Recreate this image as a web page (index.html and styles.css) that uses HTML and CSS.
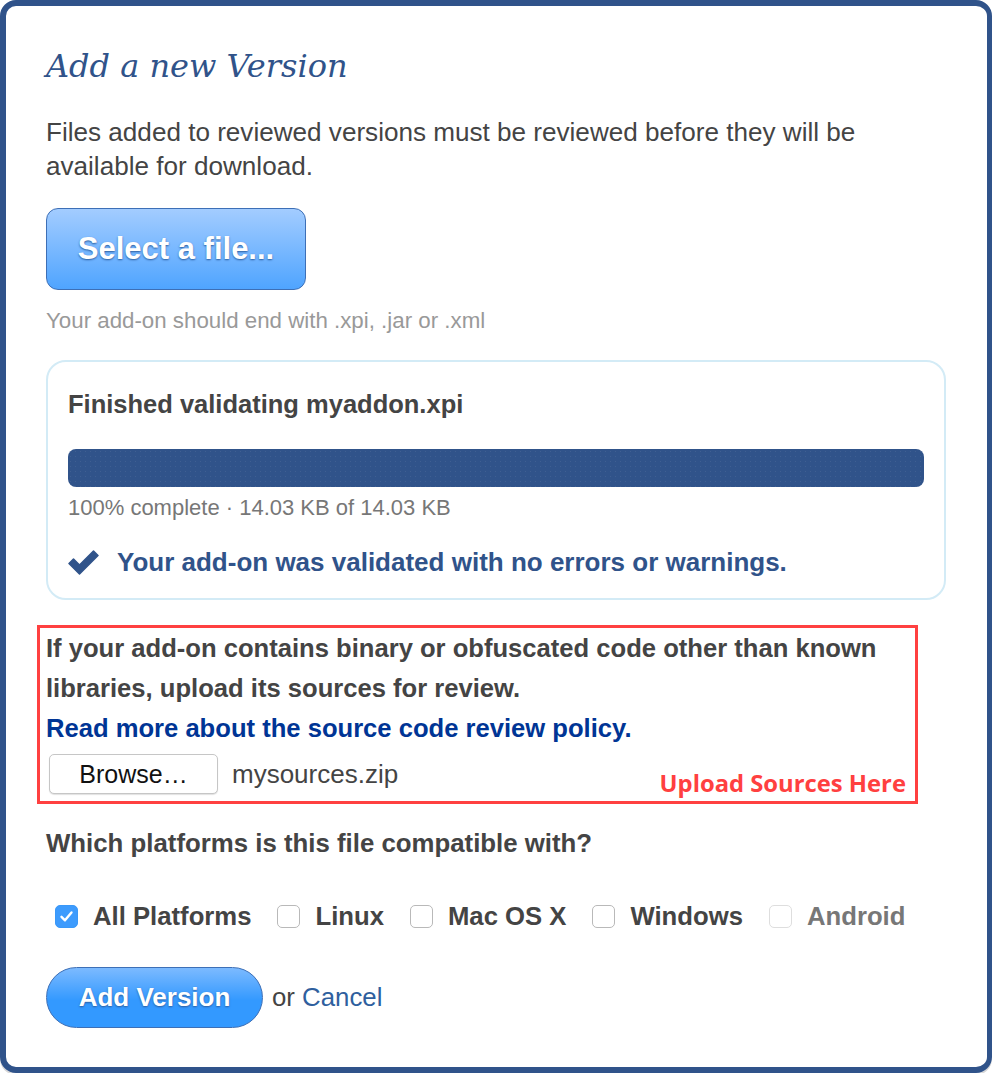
FILE: index.html
```html
<!DOCTYPE html>
<html>
<head>
<meta charset="utf-8">
<link rel="stylesheet" href="styles.css">
</head>
<body>
<div class="frame">
  <h2 class="title">Add a new Version</h2>
  <p class="intro">Files added to reviewed versions must be reviewed before they will be available for download.</p>
  <button class="select-btn">Select a file...</button>
  <p class="hint">Your add-on should end with .xpi, .jar or .xml</p>

  <div class="validation">
    <h3 class="val-title">Finished validating myaddon.xpi</h3>
    <div class="bar"></div>
    <p class="stats">100% complete · 14.03 KB of 14.03 KB</p>
    <p class="success">
      <svg class="tick" width="31" height="28" viewBox="0 0 31 28"><path d="M1 15.5 L5.5 11 L11.5 17 L25.5 3 L30 7.5 L11.5 26 Z" fill="#30538a" stroke="#30538a" stroke-width="1.5" stroke-linejoin="round"/></svg>
      <span>Your add-on was validated with no errors or warnings.</span>
    </p>
  </div>

  <div class="sources">
    <p class="src-text">If your add-on contains binary or obfuscated code other than known libraries, upload its sources for review.</p>
    <a class="src-link" href="#">Read more about the source code review policy.</a>
    <div class="src-row">
      <button class="browse">Browse…</button>
      <span class="filename">mysources.zip</span>
      <span class="upload-note">Upload Sources Here</span>
    </div>
  </div>

  <p class="platforms-q">Which platforms is this file compatible with?</p>
  <div class="platforms">
    <label class="plat"><span class="box checked"><svg width="23" height="23" viewBox="0 0 23 23"><path d="M6.5 11.8 L10 15.3 L16.5 7.5" fill="none" stroke="#fff" stroke-width="2.4" stroke-linecap="round" stroke-linejoin="round"/></svg></span>All Platforms</label>
    <label class="plat"><span class="box"></span>Linux</label>
    <label class="plat"><span class="box"></span>Mac OS X</label>
    <label class="plat"><span class="box"></span>Windows</label>
    <label class="plat disabled"><span class="box"></span>Android</label>
  </div>

  <div class="actions">
    <button class="add-btn">Add Version</button>
    <span class="or">or <a href="#" class="cancel">Cancel</a></span>
  </div>
</div>
</body>
</html>
```

FILE: styles.css
```css
* { box-sizing: border-box; }
html, body { margin: 0; padding: 0; background: #fff; }
body {
  font-family: "Liberation Sans", Arial, sans-serif;
  color: #444;
  width: 992px;
}
.frame {
  width: 992px;
  height: 1073px;
  border: 6px solid #30538a;
  border-right-width: 5px;
  border-radius: 16px;
  padding: 40px 41px 0 40px;
  box-shadow: 0 2px 0 #d8d8d8;
}
.title {
  margin: 0;
  font-family: "DejaVu Serif", Georgia, serif;
  font-style: italic;
  font-weight: normal;
  font-size: 32px;
  line-height: 40px;
  color: #30538a;
}
.intro {
  margin: 29px 0 0;
  font-size: 26.1px;
  line-height: 34px;
}
.select-btn {
  display: block;
  margin-top: 25px;
  width: 260px;
  height: 82px;
  border: 1.5px solid #3d6fb6;
  border-radius: 12px;
  background: linear-gradient(#a3ccff, #4fa4ff);
  color: #fff;
  font-family: "Liberation Sans", Arial, sans-serif;
  font-weight: bold;
  font-size: 31px;
  text-shadow: 0 1px 2px #2b5c9e;
  padding: 0;
}
.hint {
  margin: 19px 0 0;
  font-size: 22.3px;
  line-height: 24px;
  color: #999;
}
.validation {
  margin-top: 27px;
  height: 240px;
  border: 2px solid #d3ebf6;
  border-radius: 20px;
  padding: 27px 20px 0;
}
.val-title {
  margin: 0;
  font-size: 25.5px;
  line-height: 30px;
  font-weight: bold;
  color: #444;
}
.bar {
  margin-top: 30px;
  height: 38px;
  border-radius: 8px;
  background-color: #30538a;
  background-image: radial-gradient(circle, rgba(255,255,255,0.07) 0.6px, transparent 1px);
  background-size: 5px 5px;
}
.stats {
  margin: 9px 0 0;
  font-size: 22px;
  line-height: 24px;
  color: #777;
}
.success {
  margin: 27px 0 0;
  display: flex;
  align-items: center;
  gap: 18px;
  font-size: 26px;
  line-height: 30px;
  font-weight: bold;
  color: #30538a;
}
.tick { flex: none; }
.sources {
  position: relative;
  margin: 25px 0 0 -9px;
  width: 881px;
  height: 179px;
  border: 3px solid #ff4040;
  padding: 0 9px 0 6px;
}
.src-text {
  margin: 0;
  font-size: 25.6px;
  line-height: 40px;
  font-weight: bold;
}
.src-link {
  display: block;
  font-size: 25.6px;
  line-height: 40px;
  font-weight: bold;
  color: #003595;
  text-decoration: none;
}
.src-row {
  display: flex;
  align-items: center;
  margin-top: 6px;
}
.browse {
  width: 169px;
  height: 40px;
  margin-left: 3px;
  border: 1px solid #c6c6c6;
  border-radius: 5px;
  background: #fff;
  box-shadow: 0 1px 1px rgba(0,0,0,0.12);
  font-family: "Liberation Sans", Arial, sans-serif;
  font-size: 25px;
  color: #111;
  padding: 0;
}
.filename {
  margin-left: 14px;
  font-size: 26px;
}
.upload-note {
  margin-left: auto;
  align-self: flex-end;
  margin-bottom: -3px;
  font-family: "Open Sans", sans-serif;
  font-weight: bold;
  font-size: 23.8px;
  line-height: 28px;
  color: #ff4040;
}
.platforms-q {
  margin: 24px 0 0;
  font-size: 25.8px;
  line-height: 30px;
  font-weight: bold;
}
.platforms {
  margin-top: 43px;
  display: flex;
  align-items: center;
  padding-left: 9px;
  gap: 26px;
}
.plat {
  display: flex;
  align-items: center;
  gap: 15px;
  font-size: 25.7px;
  line-height: 30px;
  font-weight: bold;
  color: #444;
}
.plat.disabled { color: #777; }
.box {
  width: 23px;
  height: 23px;
  border: 1px solid #b9b9b9;
  border-radius: 5px;
  background: #fff;
  display: block;
}
.box svg { display: block; margin: -1px; }
.box.checked {
  border-color: #3a98f8;
  background: #3d9bfd;
}
.plat.disabled .box { border-color: #dedede; }
.actions {
  margin-top: 36px;
  display: flex;
  align-items: center;
}
.add-btn {
  width: 217px;
  height: 61px;
  border: 1.5px solid #3d6fb6;
  border-radius: 31px;
  background: linear-gradient(#7cbaff, #3399ff 55%);
  color: #fff;
  font-family: "Liberation Sans", Arial, sans-serif;
  font-weight: bold;
  font-size: 26px;
  text-shadow: 0 1px 2px #2b5c9e;
  padding: 0;
}
.or {
  margin-left: 9px;
  font-size: 25.8px;
}
.cancel {
  color: #2f5f9e;
  text-decoration: none;
}
```
